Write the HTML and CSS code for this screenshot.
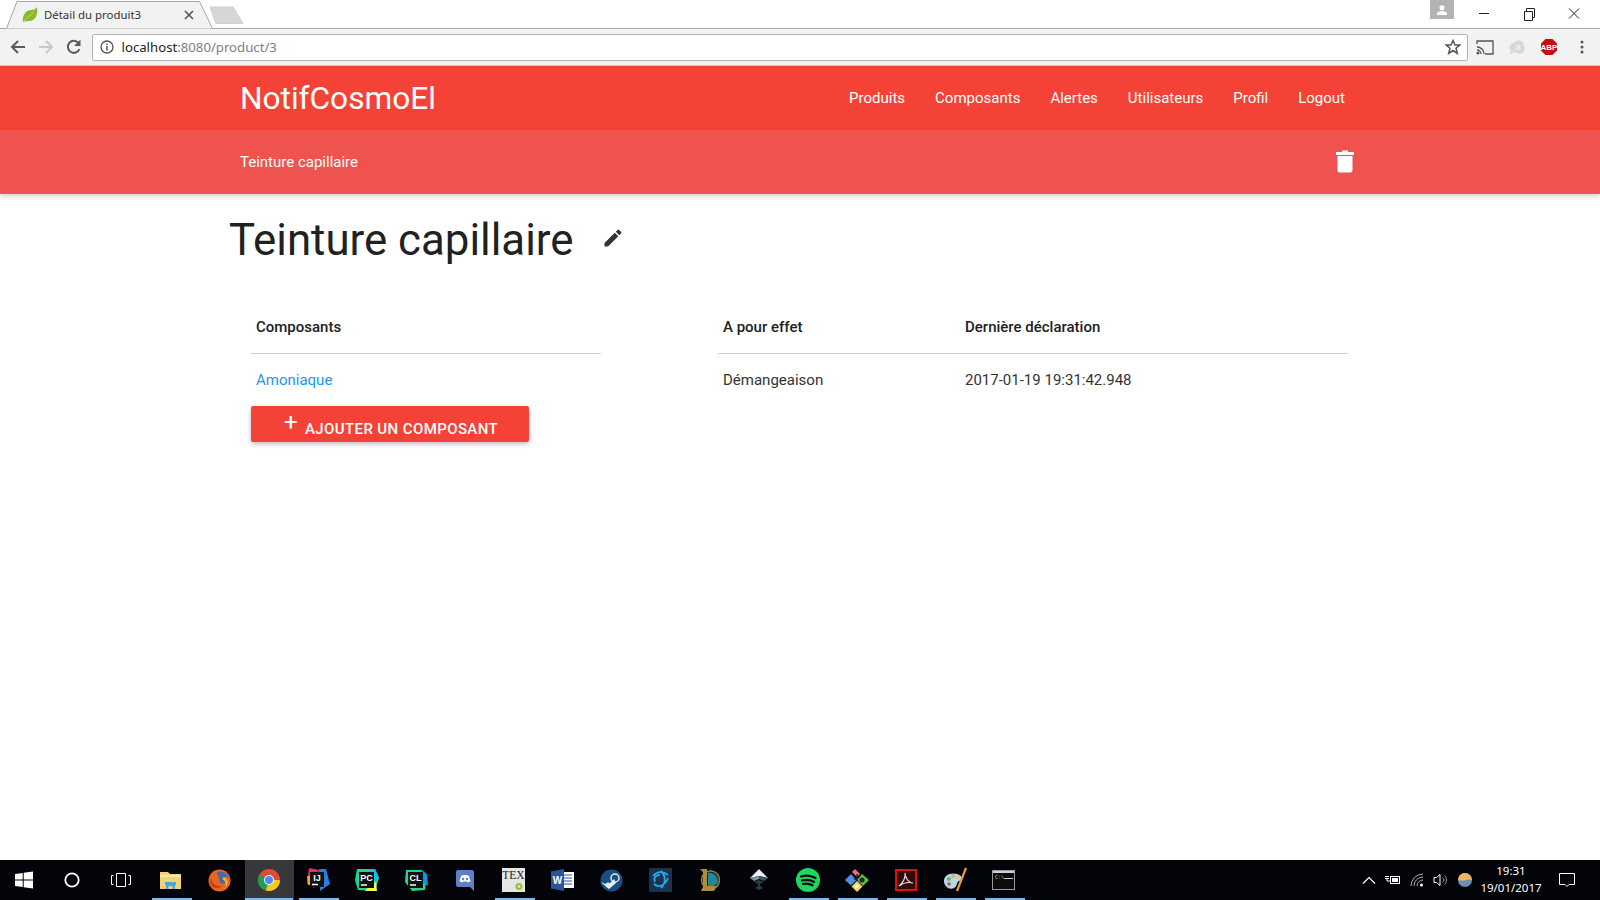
FILE: index.html
```html
<!DOCTYPE html>
<html lang="fr">
<head>
  <meta charset="UTF-8">
  <title>Détail du produit3</title>
  <link rel="stylesheet" href="styles.css">
</head>
<body>
<div class="screen">

  <!-- chrome: onglets -->
  <div class="tabstrip">
    <div class="tab">
      <svg class="tab-shape" width="216" height="29" viewBox="0 0 216 29"><path d="M0 28.5H6.5L17 1.5H199.5L212.5 28.5H216" fill="#f2f2f2" stroke="#a6a6a6"/></svg>
      <svg class="tab-icon" width="16" height="16" viewBox="0 0 16 16"><path d="M1 15C0 8 4 3 9 3C12 3 14 2 15 0C16 7 14 14 7 14C5 14 3 14 1 15Z" fill="#8cb82b"/><path d="M2 14C5 10 9 8 12 5" stroke="#c8dc60" fill="none"/></svg>
      <span class="tab-title">Détail du produit3</span>
      <svg class="tab-close" width="10" height="10" viewBox="0 0 10 10"><path d="M1 1L9 9M9 1L1 9" stroke="#555" stroke-width="1.6"/></svg>
    </div>
    <svg class="newtab" width="36" height="20" viewBox="0 0 36 20"><path d="M1 1H24L34 17.500H7Z" fill="#d6d6d6" stroke="#cfcfcf"/></svg>
    <div class="spacer"></div>
    <div class="account"><svg width="12" height="10" viewBox="0 0 12 10"><circle cx="6" cy="2.800" r="2.500" fill="#fff"/><path d="M1 10V8.500C1 7 4 6 6 6S11 7 11 8.500V10Z" fill="#fff"/></svg></div>
    <div class="winbtns">
      <svg width="45" height="28" viewBox="0 0 45 28"><path d="M18 13.500H28" stroke="#222"/></svg>
      <svg width="45" height="28" viewBox="0 0 45 28"><path d="M18.500 11.500H26.500V20.500H18.500ZM20.500 11.500V8.500H28.500V17.500H26.500" fill="none" stroke="#222"/></svg>
      <svg width="46" height="28" viewBox="0 0 46 28"><path d="M18 8.500L28 18.500M28 8.500L18 18.500" stroke="#222"/></svg>
    </div>
  </div>

  <!-- chrome: barre d'adresse -->
  <div class="toolbar">
    <svg class="tool" width="18" height="16" viewBox="0 0 18 16"><path d="M16 8H3M9 2L3 8L9 14" fill="none" stroke="#5a5a5a" stroke-width="2"/></svg>
    <svg class="tool" width="18" height="16" viewBox="0 0 18 16"><path d="M2 8H15M9 2L15 8L9 14" fill="none" stroke="#c8c8c8" stroke-width="2"/></svg>
    <svg class="tool" width="18" height="16" viewBox="0 0 18 16"><path d="M14.500 10A6 6 0 1 1 13.500 4" fill="none" stroke="#5a5a5a" stroke-width="2"/><path d="M15.500 0.500V7H9Z" fill="#5a5a5a"/></svg>
    <div class="omnibox">
      <svg width="14" height="14" viewBox="0 0 14 14"><circle cx="7" cy="7" r="6" fill="none" stroke="#555" stroke-width="1.300"/><path d="M7 6V10.500M7 3.500V5" stroke="#555" stroke-width="1.500"/></svg>
      <span class="url"><span class="url-host">localhost</span>:8080/product/3</span>
      <svg class="star" width="16" height="16" viewBox="0 0 16 16"><path d="M8 1.500L10 6H14.800L11 9.200L12.300 14.300L8 11.500L3.700 14.300L5 9.200L1.200 6H6Z" fill="none" stroke="#555" stroke-width="1.500"/></svg>
    </div>
    <div class="extensions">
      <svg width="18" height="15" viewBox="0 0 18 15"><path d="M1 4V1H17V14H9" fill="none" stroke="#555" stroke-width="1.300"/><path d="M1 7A7 7 0 0 1 8 14M1 10A4 4 0 0 1 5 14" fill="none" stroke="#555" stroke-width="1.300"/><circle cx="2" cy="13" r="1.500" fill="#555"/></svg>
      <svg width="18" height="16" viewBox="0 0 18 16"><path d="M3 5L1 9L3 11L2 15L7 13L11 15L15 14L17 9L15 3L11 1L7 3Z" fill="#d8d8d8"/><text x="10" y="11" class="avast">a</text></svg>
      <svg width="18" height="18" viewBox="0 0 18 18"><path d="M5.500 1H12.500L17 5.500V12.500L12.500 17H5.500L1 12.500V5.500Z" fill="#c40d0d"/><text x="9" y="12" class="abp">ABP</text></svg>
      <svg class="menu" width="4" height="14" viewBox="0 0 4 14"><circle cx="2" cy="2" r="1.500" fill="#555"/><circle cx="2" cy="7" r="1.500" fill="#555"/><circle cx="2" cy="12" r="1.500" fill="#555"/></svg>
    </div>
  </div>

  <!-- la page -->
  <nav class="nav">
    <div class="container nav-row">
      <a class="brand">NotifCosmoEl</a>
      <ul class="nav-links">
        <li>Produits</li>
        <li>Composants</li>
        <li>Alertes</li>
        <li>Utilisateurs</li>
        <li>Profil</li>
        <li>Logout</li>
      </ul>
    </div>
  </nav>
  <div class="subnav">
    <div class="container nav-row">
      <span>Teinture capillaire</span>
      <svg class="trash" width="18" height="24" viewBox="0 0 18 24"><path d="M6 1.500H12V3H18V6H0V3H6Z" fill="#fff"/><path d="M1.500 7H16.500V21.500C16.500 22.800 15.500 23.500 14.500 23.500H3.500C2.500 23.500 1.500 22.800 1.500 21.500Z" fill="#fff"/></svg>
    </div>
  </div>

  <main class="container content">
    <div class="title-row">
      <h1>Teinture capillaire</h1>
      <svg class="edit" width="18" height="18" viewBox="0 0 18 18"><path d="M0.500 17.500V14L10.800 3.700L14.300 7.200L4 17.500ZM11.800 2.700L13.500 1C14 .5 14.700 .5 15.200 1L17 2.800C17.500 3.300 17.500 4 17 4.500L15.300 6.200Z" fill="#333"/></svg>
    </div>
    <div class="tables">
      <div class="col-left">
        <table>
          <thead><tr><th>Composants</th></tr></thead>
          <tbody><tr><td><a class="link">Amoniaque</a></td></tr></tbody>
        </table>
        <button class="btn"><span class="plus">+</span>AJOUTER UN COMPOSANT</button>
      </div>
      <div class="col-right">
        <table>
          <thead><tr><th class="effect">A pour effet</th><th>Dernière déclaration</th></tr></thead>
          <tbody><tr><td>Démangeaison</td><td>2017-01-19 19:31:42.948</td></tr></tbody>
        </table>
      </div>
    </div>
  </main>

  <!-- barre des taches -->
  <footer class="taskbar">
    <div class="cell"><svg width="18" height="18" viewBox="0 0 18 18"><path d="M0 3L7.700 2V8.500H0ZM8.700 1.800L18 .5V8.500H8.700ZM0 9.500H7.700V16L0 15ZM8.700 9.500H18V17.500L8.700 16.200Z" fill="#fff"/></svg></div>
    <div class="cell shift"><svg width="16" height="16" viewBox="0 0 16 16"><circle cx="8" cy="8" r="6.700" fill="none" stroke="#fff" stroke-width="1.800"/></svg></div>
    <div class="cell shift"><svg width="20" height="14" viewBox="0 0 20 14"><path d="M5.500 .5H14.500V13.500H5.500ZM2.500 2.500H.5V11.500H2.500M17.500 2.500H19.500V11.500H17.500" fill="none" stroke="#fff"/></svg></div>
    <div class="cell open"><svg width="22" height="20" viewBox="0 0 22 20"><path d="M0 2H8L10 4H21V19H0Z" fill="#f3d272"/><path d="M0 5H21V7H0Z" fill="#fbe8a8"/><path d="M6 14H15V19H12.500V16H8.500V19H6Z" fill="#3fa9e0"/><path d="M5 12H16V15H5Z" fill="#3fa9e0"/></svg></div>
    <div class="cell"><svg width="23" height="23" viewBox="0 0 23 23"><circle cx="11.500" cy="11.500" r="11" fill="#e8661c"/><path d="M9 3C14 1 20 4 22 10C20 7 18 7 17 8C19 11 18 14 15 15C12 14 10 11 11 8C10 6 9 5 9 3Z" fill="#3d6fb0"/><path d="M16 8C20 10 21 15 17 19C19 15 17 11 14 10Z" fill="#f7b52c"/><path d="M3 8C3 14 8 18 14 17C10 21 4 19 2 14Z" fill="#c8401a"/></svg></div>
    <div class="cell active"><svg width="22" height="22" viewBox="0 0 22 22"><circle cx="11" cy="11" r="11" fill="#dd4b39"/><path d="M11 11L1.500 5.500A11 11 0 0 0 8 21.600Z" fill="#1f9e55"/><path d="M11 11L8 21.600A11 11 0 0 0 22 11H11Z" fill="#f8c81c"/><circle cx="11" cy="11" r="5" fill="#fff"/><circle cx="11" cy="11" r="4" fill="#4c8bf5"/></svg></div>
    <div class="cell open"><svg width="24" height="24" viewBox="0 0 24 24"><path d="M3 0L13 2L8 20L1 15Z" fill="#f0266e"/><path d="M13 1H20L24 16L14 23Z" fill="#2a7de1"/><path d="M1 8H6L6 17H2Z" fill="#f8a51b"/><rect x="4" y="4" width="14" height="15" fill="#111"/><text x="11" y="12.500" class="ide">IJ</text><path d="M6 16.500H12" stroke="#fff" stroke-width="1.500"/></svg></div>
    <div class="cell"><svg width="24" height="24" viewBox="0 0 24 24"><path d="M2 1H20L24 10L20 23L3 22L0 12Z" fill="#21d789"/><path d="M14 1H20L24 10L20 14Z" fill="#07c3f2"/><path d="M16 16L21 14L22 23L10 23Z" fill="#fcf84a"/><rect x="4" y="4" width="15" height="16" fill="#111"/><text x="11.500" y="12.500" class="ide">PC</text><path d="M6 17H12" stroke="#fff" stroke-width="1.500"/></svg></div>
    <div class="cell"><svg width="24" height="24" viewBox="0 0 24 24"><path d="M2 2H18L23 8L21 22L8 23L1 14Z" fill="#21d789"/><path d="M16 1L23 6L24 18L18 14Z" fill="#009ae5"/><rect x="4" y="4" width="15" height="16" fill="#111"/><text x="11.500" y="12.500" class="ide">CL</text><path d="M6 17H12" stroke="#fff" stroke-width="1.500"/></svg></div>
    <div class="cell"><svg width="18" height="21" viewBox="0 0 18 21"><path d="M2 0H16C17 0 18 1 18 2V21L14 17H2C1 17 0 16 0 15V2C0 1 1 0 2 0Z" fill="#5f7fc7"/><path d="M5 6C7 4.800 11 4.800 13 6L14.500 11C13.500 12 12.500 12.300 11.500 12.500L11 11.500H7L6.500 12.500C5.500 12.300 4.500 12 3.500 11Z" fill="#fff"/><circle cx="7" cy="9" r="1.200" fill="#5f7fc7"/><circle cx="11" cy="9" r="1.200" fill="#5f7fc7"/></svg></div>
    <div class="cell open"><svg width="23" height="24" viewBox="0 0 23 24"><rect width="23" height="24" fill="#e6e6e6"/><text x="11.500" y="11" class="tex">TEX</text><circle cx="17" cy="18.500" r="3.500" fill="#9bbf3b"/><circle cx="17" cy="18.500" r="1.300" fill="#e6e6e6"/></svg></div>
    <div class="cell"><svg width="23" height="22" viewBox="0 0 23 22"><rect x="10" y="3" width="13" height="16" fill="#fff"/><path d="M13 6H21M13 9H21M13 12H21M13 15H21" stroke="#2a5699"/><path d="M0 2.500L13 0V22L0 19.500Z" fill="#2a5699"/><text x="6.500" y="15" class="word">W</text></svg></div>
    <div class="cell"><svg width="23" height="23" viewBox="0 0 23 23"><circle cx="11.500" cy="11.500" r="11" fill="#1a4f80"/><path d="M0.500 13L8 16L14 10L16 14L9 20Z" fill="#e6eef5"/><circle cx="15" cy="9" r="4" fill="none" stroke="#dfe9f2" stroke-width="1.500"/><circle cx="8" cy="16" r="2.500" fill="#dfe9f2"/></svg></div>
    <div class="cell"><svg width="23" height="24" viewBox="0 0 23 24"><rect width="23" height="24" rx="1" fill="#1c3350"/><path d="M4 8C8 3 14 3 19 7M12 3C17 8 17 15 12 20M19 10C16 18 9 20 5 16M6 14C4 9 7 7 11 7" fill="none" stroke="#23a9e8" stroke-width="1.800"/></svg></div>
    <div class="cell"><svg width="21" height="24" viewBox="0 0 21 24"><circle cx="11.500" cy="12" r="9" fill="#0b2a33" stroke="#9a7b36" stroke-width="1.500"/><path d="M9 5C15 4 19 9 19 14C17 18 13 19 9 18Z" fill="#1b8b9a"/><path d="M1 1H8V18H18L15 23H2L4 19V4Z" fill="#b18a3b"/></svg></div>
    <div class="cell"><svg width="20" height="22" viewBox="0 0 20 22"><path d="M10 0L19 9L10 7L1 9Z" fill="#e8eef3"/><path d="M1 9L10 7V10L5 12Z" fill="#7f93a3"/><path d="M19 9L10 7V10L15 12Z" fill="#3d5464"/><path d="M5 13L10 11L15 13L11 15V17L14 19L10 21L6 19L9 17V15Z" fill="#2b3a45"/></svg></div>
    <div class="cell open"><svg width="24" height="24" viewBox="0 0 24 24"><circle cx="12" cy="12" r="12" fill="#1ed760"/><path d="M5 8.500C10 7 15 7.500 19.500 10M6 12.500C10 11.300 14.500 11.800 18 14M7 16C10 15.300 13.500 15.500 16.500 17.300" fill="none" stroke="#0a0a0a" stroke-width="2.200" stroke-linecap="round"/></svg></div>
    <div class="cell open"><svg width="24" height="24" viewBox="0 0 24 24"><path d="M7 4L10 1L15 6L12 9Z" fill="#ef6f7b"/><path d="M6 6L11.500 12L6 17.500L0 12Z" fill="#4d8fe8"/><path d="M17 6L24 12L18 18L12 12Z" fill="#5bbd4b"/><path d="M12 13L17.500 18.500L12 24L6.500 18.500Z" fill="#f6d860"/><circle cx="17" cy="12" r="2.500" fill="#222"/><path d="M12 6V13M9 11H12" stroke="#222" stroke-width="1.500"/><circle cx="12" cy="18.500" r="1.800" fill="#fff"/></svg></div>
    <div class="cell open"><svg width="22" height="22" viewBox="0 0 22 22"><rect x="1" y="1" width="20" height="20" fill="#2b0b0b" stroke="#e01010" stroke-width="2"/><path d="M4 17C8 14 11 8 10 4C10 9 14 14 18 14C14 13 8 14 4 17Z" fill="none" stroke="#f2d0d0" stroke-width="1.200"/></svg></div>
    <div class="cell open"><svg width="24" height="26" viewBox="0 0 24 26"><path d="M1 15C0 8 8 5 14 7C20 9 20 13 16 14C13 15 15 19 11 21C6 23 2 20 1 15Z" fill="#b4d7ee"/><circle cx="6" cy="12" r="2" fill="#5bbd4b"/><circle cx="10" cy="9" r="1.800" fill="#e8a04a"/><circle cx="15" cy="10" r="1.500" fill="#f5c33c"/><circle cx="6" cy="17" r="1.800" fill="#e04a3c"/><path d="M23 1L14 24" stroke="#e89a3c" stroke-width="2.200"/></svg></div>
    <div class="cell open"><svg width="23" height="20" viewBox="0 0 23 20"><rect x=".5" y=".5" width="22" height="19" fill="#0c0c0c" stroke="#9a9a9a"/><path d="M1 1H22V3H1Z" fill="#cfcfcf"/><text x="3" y="9" class="cmd">C:\</text><path d="M12 8.500H21" stroke="#ccc"/></svg></div>
    <div class="spacer"></div>
    <div class="tray">
      <svg width="14" height="8" viewBox="0 0 14 8"><path d="M1 7.500L7 1.500L13 7.500" fill="none" stroke="#fff" stroke-width="1.200"/></svg>
      <svg width="16" height="10" viewBox="0 0 16 10"><path d="M0 1.500H4M0 3.500H4M2 3.500V6H5" fill="none" stroke="#fff"/><rect x="5.500" y="1.500" width="9" height="7" fill="none" stroke="#fff"/><rect x="7" y="3" width="6" height="4" fill="#fff"/></svg>
      <svg width="14" height="14" viewBox="0 0 14 14"><path d="M1 13A12 12 0 0 1 13 1M4 13A9 9 0 0 1 13 4M7 13A6 6 0 0 1 13 7" fill="none" stroke="#aaa"/><circle cx="11.500" cy="12" r="1.500" fill="#fff"/></svg>
      <svg width="16" height="14" viewBox="0 0 16 14"><path d="M1 4.500H3.500L7 1.500V12.500L3.500 9.500H1Z" fill="none" stroke="#fff"/><path d="M9.500 4.500A3 3 0 0 1 9.500 9.500M11.500 2.500A6 6 0 0 1 11.500 11.500" fill="none" stroke="#999"/></svg>
      <svg width="14" height="14" viewBox="0 0 14 14"><circle cx="7" cy="7" r="7" fill="#6f8db5"/><path d="M0 7A7 7 0 0 1 14 7C10 5 6 9 0 7Z" fill="#f3b65a"/></svg>
    </div>
    <div class="clock"><span>19:31</span><span>19/01/2017</span></div>
    <div class="notif"><svg width="16" height="15" viewBox="0 0 16 15"><path d="M.5 .5H15.500V11.500H10L8 13.500L6 11.500H.5Z" fill="none" stroke="#fff"/></svg></div>
  </footer>
</div>
</body>
</html>
```

FILE: styles.css
```css
* {
  box-sizing: border-box;
}
html, body {
  margin: 0;
  height: 100%;
}
body {
  font-family: Roboto, sans-serif;
  font-size: 15px;
  color: #333;
  background-color: #fff;
}
svg {
  display: block;
  flex: none;
}
.screen {
  display: flex;
  flex-direction: column;
  height: 900px;
  overflow: hidden;
}
.spacer {
  flex: 1;
}

/* onglets */
.tabstrip {
  display: flex;
  height: 29px;
  border-bottom: 1px solid #a6a6a6;
  background-color: #fff;
}
.tab {
  position: relative;
  display: flex;
  align-items: center;
  width: 216px;
  height: 29px;
  padding-left: 22px;
  margin-bottom: -1px;
}
.tab-shape {
  position: absolute;
  left: 0;
  top: 0;
}
.tab-icon, .tab-title, .tab-close {
  position: relative;
}
.tab-title {
  margin-left: 6px;
  width: 134px;
  font-family: "Noto Sans", sans-serif;
  font-size: 11.400px;
  color: #333;
}
.tab-close {
  margin-left: 6px;
}
.newtab {
  margin: 6px 0 0 -7px;
}
.account {
  display: flex;
  align-items: center;
  justify-content: center;
  width: 24px;
  height: 19px;
  background-color: #b3b3b3;
  margin-right: 7px;
}
.winbtns {
  display: flex;
  width: 136px;
  margin-right: 3px;
}

/* barre d'adresse */
.toolbar {
  display: flex;
  align-items: center;
  height: 37px;
  padding: 0 0 0 9px;
  background-color: #f2f2f2;
  border-bottom: 1px solid #c8c8c8;
}
.tool {
  margin-right: 10px;
}
.omnibox {
  display: flex;
  align-items: center;
  width: 1376px;
  height: 27px;
  margin-left: -1px;
  padding: 0 6px 0 7px;
  background-color: #fff;
  border: 1px solid #b4b4b4;
  border-radius: 2px;
}
.url {
  flex: 1;
  margin-left: 7.500px;
  font-family: "Noto Sans", sans-serif;
  font-size: 13.200px;
  color: #808080;
}
.url-host {
  color: #222;
}
.extensions {
  display: flex;
  align-items: center;
  gap: 14px;
  margin-left: 8px;
}
.menu {
  margin-left: 8px;
}
.avast {
  font: bold 9px "Liberation Sans", sans-serif;
  fill: #f2f2f2;
  text-anchor: middle;
}
.abp {
  font: bold 8px "Liberation Sans", sans-serif;
  fill: #fff;
  text-anchor: middle;
}

/* navigation */
.container {
  width: 1120px;
  margin: 0 auto;
}
.nav-row {
  display: flex;
  align-items: center;
  justify-content: space-between;
  height: 100%;
}
.nav {
  height: 64px;
  background-color: #f44336;
  color: #fff;
}
.brand {
  font-size: 31.600px;
}
.nav-links {
  display: flex;
  list-style: none;
  margin: 0;
  padding: 0;
}
.nav-links li {
  padding: 0 15px;
}
.subnav {
  position: relative;
  height: 64px;
  background-color: #ef5350;
  color: #fff;
  box-shadow: 0 2px 5px rgba(0, 0, 0, 0.2);
}
.trash {
  margin: -2px 6px 0 0;
}

/* contenu */
.content {
  flex: 1;
}
.title-row {
  display: flex;
  align-items: center;
  margin: 18px 0 0 -11px;
  height: 56px;
}
h1 {
  margin: 0;
  font-size: 43.800px;
  font-weight: 400;
  color: #212121;
}
.edit {
  margin: -4px 0 0 30px;
}
.tables {
  display: flex;
  margin: 35px 0 0 11px;
}
.col-left {
  width: 350px;
  margin-right: 117px;
}
.col-right {
  width: 630px;
}
table {
  width: 100%;
  border-collapse: collapse;
}
th {
  height: 50px;
  padding: 14px 5px 16px;
  text-align: left;
  font-weight: 500;
  font-size: 15px;
  color: #212121;
  border-bottom: 1px solid #d0d0d0;
}
td {
  height: 53px;
  padding: 15px 5px;
}
.effect {
  width: 242px;
}
.link {
  color: #2196f3;
}
.btn {
  display: flex;
  align-items: center;
  justify-content: center;
  width: 278px;
  height: 36px;
  padding: 9px 0 0 2px;
  border: none;
  border-radius: 2px;
  background-color: #f44336;
  color: #fff;
  font-family: Roboto, sans-serif;
  font-size: 15px;
  font-weight: 500;
  letter-spacing: 0.4px;
  box-shadow: 0 2px 5px rgba(0, 0, 0, 0.26);
}
.plus {
  font-size: 24px;
  font-weight: 400;
  line-height: 20px;
  margin: -13px 7px 0 0;
}

/* barre des taches */
.taskbar {
  display: flex;
  align-items: center;
  height: 40px;
  background-color: #02040a;
  color: #fff;
}
.cell {
  display: flex;
  align-items: center;
  justify-content: center;
  position: relative;
  width: 49px;
  height: 40px;
  padding-right: 2px;
}
.cell.shift {
  padding-right: 4px;
}
.cell.open::after {
  content: "";
  position: absolute;
  left: 5px;
  right: 4px;
  bottom: 0;
  height: 2px;
  background-color: #76b9ed;
}
.cell.active {
  background-color: #37383b;
}
.cell.active::after {
  content: "";
  position: absolute;
  left: 0;
  right: 1px;
  bottom: 0;
  height: 2px;
  background-color: #76b9ed;
}
.ide {
  font: bold 9px "Liberation Sans", sans-serif;
  fill: #fff;
  text-anchor: middle;
}
.tex {
  font: 11.500px "Liberation Serif", serif;
  fill: #222;
  text-anchor: middle;
}
.word {
  font: bold 10px "Liberation Sans", sans-serif;
  fill: #fff;
  text-anchor: middle;
}
.cmd {
  font: 5px "Liberation Mono", monospace;
  fill: #ccc;
}
.tray {
  display: flex;
  align-items: center;
  gap: 9px;
}
.clock {
  display: flex;
  flex-direction: column;
  align-items: center;
  width: 72px;
  margin: -2px 0 0 3px;
  font-family: "Noto Sans", sans-serif;
  font-size: 11.500px;
  line-height: 17px;
}
.notif {
  display: flex;
  justify-content: center;
  width: 40px;
  margin-right: 13px;
}
```
